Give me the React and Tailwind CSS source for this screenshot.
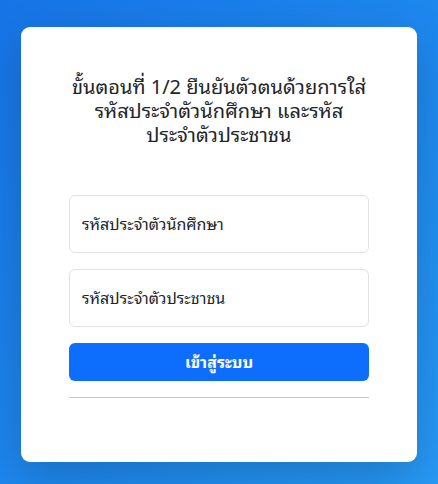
const App = () => {
    return (
        <div className="h-[484px] w-full flex justify-center pt-[27px] bg-gradient-to-br from-[#1774e6] to-[#279af7] font-['Noto_Sans','Noto_Sans_Thai_Looped',sans-serif]">
            <div className="w-[396px] h-[435px] bg-white rounded-[9px] p-12 shadow-[0_1rem_3rem_rgba(0,0,0,0.2)]">
                <h5 className="text-[20px] leading-[24px] font-normal text-[#212529] text-center mb-12">
                    ขั้นตอนที่ 1/2 ยืนยันตัวตนด้วยการใส่
                    <br />
                    รหัสประจำตัวนักศึกษา และรหัส
                    <br />
                    ประจำตัวประชาชน
                </h5>
                <form>
                    <div className="mb-4">
                        <input
                            type="text"
                            placeholder="รหัสประจำตัวนักศึกษา"
                            className="w-full h-[58px] border border-[#dee2e6] rounded-[6px] px-3 text-base text-[#212529] placeholder:text-[#212529] focus:outline-none"
                        />
                    </div>
                    <div className="mb-4">
                        <input
                            type="text"
                            placeholder="รหัสประจำตัวประชาชน"
                            className="w-full h-[58px] border border-[#dee2e6] rounded-[6px] px-3 text-base text-[#212529] placeholder:text-[#212529] focus:outline-none"
                        />
                    </div>
                    <button
                        type="submit"
                        className="w-full h-[38px] bg-[#0d6efd] text-white text-base font-bold rounded-[6px]"
                    >
                        เข้าสู่ระบบ
                    </button>
                </form>
                <hr className="mt-4 border-t border-[#c8c9ca]" />
            </div>
        </div>
    )
}

export default App
